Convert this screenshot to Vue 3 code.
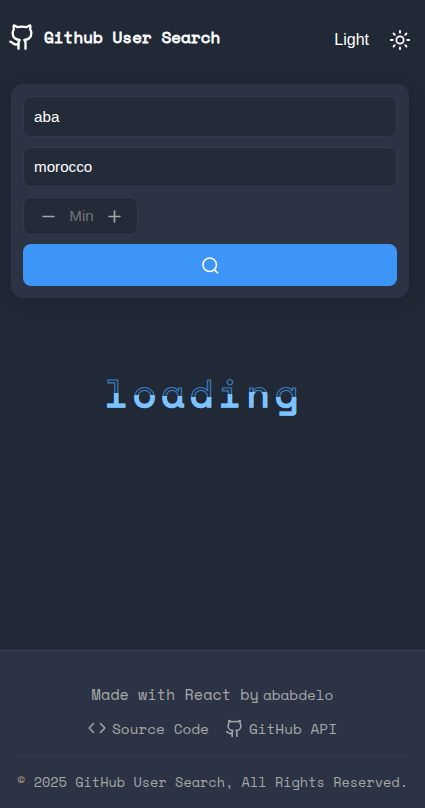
<script setup>
import { ref } from 'vue'

const username = ref('aba')
const location = ref('morocco')
const repos = ref('')
const letters = [
  { char: 'l', level: 25 },
  { char: 'o', level: 27 },
  { char: 'a', level: 28 },
  { char: 'd', level: 29 },
  { char: 'i', level: 26 },
  { char: 'n', level: 24 },
  { char: 'g', level: 29 }
]
</script>

<template>
  <div class="page">
    <header class="header">
      <div class="brand">
        <svg class="brand-icon" viewBox="0 0 24 24">
          <path d="M15 22v-4a4.800 4.800 0 0 0-1-3.500c3 0 6-2 6-5.500.08-1.250-.27-2.480-1-3.500.28-1.150.28-2.350 0-3.500 0 0-1 0-3 1.500-2.640-.5-5.360-.5-8 0C6 2 5 2 5 2c-.3 1.150-.3 2.350 0 3.500A5.403 5.403 0 0 0 4 9c0 3.500 3 5.500 6 5.500-.39.49-.68 1.050-.85 1.650-.17.6-.22 1.230-.15 1.850v4" />
          <path d="M9 18c-4.510 2-5-2-7-2" />
        </svg>
        <h1 class="title mono">Github User Search</h1>
      </div>
      <div class="theme">
        <span>Light</span>
        <svg class="sun" viewBox="0 0 24 24">
          <circle cx="12" cy="12" r="4" />
          <path d="M12 2v2M12 20v2M2 12h2M20 12h2M4.930 4.930l1.410 1.410M17.660 17.660l1.410 1.410M6.340 17.660l-1.410 1.410M19.070 4.930l-1.410 1.410" />
        </svg>
      </div>
    </header>

    <form class="card" @submit.prevent>
      <input v-model="username" class="field" type="text" />
      <input v-model="location" class="field second" type="text" />
      <div class="counter">
        <svg viewBox="0 0 12 12"><path d="M1 6h10" /></svg>
        <input v-model="repos" class="min" type="text" placeholder="Min" />
        <svg viewBox="0 0 12 12"><path d="M1 6h10M6 1v10" /></svg>
      </div>
      <button class="search" type="submit">
        <svg viewBox="0 0 24 24"><circle cx="11" cy="11" r="8.500" /><path d="m17 17.500 4 4" /></svg>
      </button>
    </form>

    <main class="loading mono">
      <span
        v-for="letter in letters"
        :key="letter.char"
        class="letter"
        :data-char="letter.char"
        :style="{ '--level': letter.level + 'px' }"
      >{{ letter.char }}</span>
    </main>

    <footer class="footer mono">
      <p class="made"><span>Made with React by</span><a class="author">ababdelo</a></p>
      <nav class="links">
        <a class="link">
          <svg class="code" viewBox="0 0 18 18"><path d="M5.500 4.500 1.200 9l4.300 4.500M12.500 4.500 16.800 9l-4.300 4.500" /></svg>
          <span>Source Code</span>
        </a>
        <a class="link api">
          <svg class="cat" viewBox="0 0 24 24">
            <path d="M15 22v-4a4.800 4.800 0 0 0-1-3.500c3 0 6-2 6-5.500.08-1.250-.27-2.480-1-3.500.28-1.150.28-2.350 0-3.500 0 0-1 0-3 1.500-2.640-.5-5.360-.5-8 0C6 2 5 2 5 2c-.3 1.150-.3 2.350 0 3.500A5.403 5.403 0 0 0 4 9c0 3.500 3 5.500 6 5.500-.39.49-.68 1.050-.85 1.650-.17.6-.22 1.230-.15 1.850v4" />
            <path d="M9 18c-4.510 2-5-2-7-2" />
          </svg>
          <span>GitHub API</span>
        </a>
      </nav>
      <p class="copyright"><span class="sign">©</span> 2025 GitHub User Search, All Rights Reserved.</p>
    </footer>
  </div>
</template>

<style>
body {
  background: #212836;
}
</style>

<style scoped>
* {
  box-sizing: border-box;
}
.page {
  height: 808px;
  display: flex;
  flex-direction: column;
  overflow: hidden;
  background: #212836;
  color: #fff;
  font-family: "Liberation Sans", Arial, sans-serif;
}
.mono {
  font-family: "Space Mono", "Liberation Mono", monospace;
}
svg {
  display: block;
  flex: none;
  fill: none;
  stroke: currentColor;
  stroke-width: 2;
  stroke-linecap: round;
  stroke-linejoin: round;
}
.header {
  height: 84px;
  padding: 23px 14px 0 8px;
  display: flex;
  justify-content: space-between;
  align-items: flex-start;
}
.brand {
  display: flex;
  align-items: flex-start;
  gap: 8px;
}
.brand-icon {
  width: 28px;
  height: 28px;
}
.title {
  margin: 0;
  padding-top: 2px;
  font-size: 16px;
  font-weight: 400;
  line-height: 24px;
  -webkit-text-stroke: 0.8px #fff;
}
.theme {
  display: flex;
  align-items: center;
  gap: 20px;
  padding-top: 5px;
  font-size: 16px;
  line-height: 24px;
}
.sun {
  width: 22px;
  height: 22px;
}
.card {
  height: 214px;
  margin: 0 16px 0 11px;
  padding: 12px;
  display: flex;
  flex-direction: column;
  align-items: stretch;
  flex: none;
  border-radius: 12px;
  background: #2b3345;
  box-shadow: 0 4px 20px rgba(0, 0, 0, 0.12);
}
.field {
  width: 100%;
  height: 41px;
  padding: 0 10px;
  border: 1px solid #303a4b;
  border-radius: 8px;
  outline: none;
  background: #232b39;
  color: #fff;
  font: 15.200px "Liberation Sans", Arial, sans-serif;
}
.second {
  height: 40px;
  margin-top: 10px;
  padding-bottom: 2px;
}
.counter {
  width: 115px;
  height: 38px;
  margin-top: 10px;
  padding: 0 16px 0 18px;
  display: flex;
  align-items: center;
  align-self: flex-start;
  border: 1px solid #303a4b;
  border-radius: 8px;
  background: #232b39;
  color: #a7a7a7;
}
.counter svg {
  width: 13px;
  height: 13px;
  stroke-width: 1.500;
}
.min {
  width: 40px;
  min-width: 0;
  height: 30px;
  flex: 1;
  padding: 0 0 1px 0;
  border: 0;
  outline: 0;
  background: transparent;
  color: #fff;
  text-align: center;
  font: 15.200px "Liberation Sans", Arial, sans-serif;
}
.min::placeholder {
  color: #757278;
  opacity: 1;
}
.search {
  height: 42px;
  margin-top: 9px;
  padding: 0;
  display: flex;
  align-items: center;
  justify-content: center;
  border: 0;
  border-radius: 8px;
  background: #3d95f7;
  color: #fff;
}
.search svg {
  width: 19px;
  height: 19px;
}
.loading {
  flex: 1;
  padding: 70px 0 0 102px;
  display: flex;
  align-items: flex-start;
  font-size: 38.400px;
}
.letter {
  position: relative;
  width: 28.400px;
  height: 56px;
  line-height: 50px;
  text-align: center;
  color: #212836;
  -webkit-text-stroke: 1.200px #397cbb;
}
.letter::after {
  content: attr(data-char);
  position: absolute;
  inset: 0;
  color: #7dc3ff;
  -webkit-text-stroke: 1.500px #7dc3ff;
  clip-path: inset(var(--level) 0 0 0);
}
.footer {
  height: 158px;
  flex: none;
  padding: 32px 16px 0;
  border-top: 1px solid #394255;
  background: #2b3345;
  color: #a7a7a7;
}
.made {
  margin: 0;
  display: flex;
  justify-content: center;
  align-items: baseline;
  gap: 4px;
  font-size: 15.200px;
  line-height: 22px;
}
.author {
  font-size: 14.400px;
}
.links {
  height: 49px;
  padding-bottom: 5px;
  display: flex;
  align-items: center;
  justify-content: center;
  gap: 16px;
  font-size: 14.400px;
}
.link {
  display: flex;
  align-items: center;
  gap: 6px;
}
.api {
  gap: 5px;
}
.code {
  width: 18px;
  height: 18px;
  stroke-width: 1.500;
}
.cat {
  width: 19px;
  height: 19px;
}
.copyright {
  margin: 0;
  padding-top: 15px;
  border-top: 1px solid #333c4e;
  text-align: center;
  white-space: nowrap;
  font-size: 13.600px;
  line-height: 22px;
}
.sign {
  color: #b89c84;
}
</style>
